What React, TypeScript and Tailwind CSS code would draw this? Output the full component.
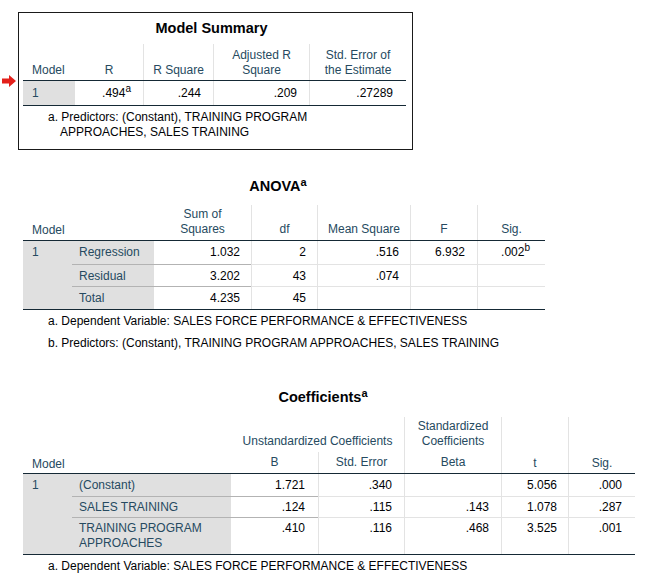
import React from "react";

const HDR = "text-[#264a60]";
const DAT = "text-[#010205]";
const VL = "border-l border-[#e3e3e3]";
const RL = "border-b border-[#b3b3b3]";
const GRAY = "bg-[#e0e0e0]";

function Title({ text, sup }: { text: string; sup?: string }) {
  return (
    <div className="h-[20px] leading-[20px] pr-[12px] text-center text-[14.5px] font-bold text-[#010205]">
      {text}
      {sup ? <sup className="text-[11px] font-bold">{sup}</sup> : null}
    </div>
  );
}

function ModelSummary() {
  const cols = "grid grid-cols-[52px_68px_70px_96px_97px]";
  return (
    <div className="w-[395px] border border-[#1a1a1a] pl-[4px]">
      <div className="h-[31px] pt-[5px]">
        <Title text="Model Summary" />
      </div>
      <div className="w-[383px]">
        <div className={`${cols} h-[37px] border-b border-[#152935] ${HDR}`}>
          <div className="flex items-end pl-[9px] pb-[2px]">Model</div>
          <div className="flex items-end justify-center pb-[2px]">R</div>
          <div className={`flex items-end justify-center pb-[2px] ${VL}`}>R Square</div>
          <div className={`flex items-end justify-center text-center pb-[2px] ${VL}`}>
            Adjusted R
            <br />
            Square
          </div>
          <div className={`flex items-end justify-center text-center pb-[2px] ${VL}`}>
            Std. Error of
            <br />
            the Estimate
          </div>
        </div>
        <div className={`${cols} h-[25px] border-b border-[#152935]`}>
          <div className={`${GRAY} ${HDR} pl-[9px] pt-[5px]`}>1</div>
          <div className={`${DAT} text-right pr-[12px] pt-[5px]`}>
            .494<sup className="text-[10px]">a</sup>
          </div>
          <div className={`${DAT} text-right pr-[12px] pt-[5px] ${VL}`}>.244</div>
          <div className={`${DAT} text-right pr-[12px] pt-[5px] ${VL}`}>.209</div>
          <div className={`${DAT} text-right pr-[13px] pt-[5px] ${VL}`}>.27289</div>
        </div>
        <div className={`h-[43px] pt-[4px] ${DAT}`}>
          <div className="pl-[25px]">a. Predictors: (Constant), TRAINING PROGRAM</div>
          <div className="pl-[37px]">APPROACHES, SALES TRAINING</div>
        </div>
      </div>
    </div>
  );
}

function Anova() {
  const cols = "grid grid-cols-[49px_82px_97px_66px_93px_67px_68px]";
  const rows: [string, string, string, string, string, React.ReactNode, string][] = [
    ["Regression", "1.032", "2", ".516", "6.932", <>.002<sup className="text-[10px]">b</sup></>, "pt-[4px]"],
    ["Residual", "3.202", "43", ".074", "", "", "pt-[4px]"],
    ["Total", "4.235", "45", "", "", "", "pt-[4px]"],
  ];
  return (
    <div className="ml-[23px] mt-[26px] w-[522px]">
      <Title text="ANOVA" sup="a" />
      <div className="mt-[9px]">
        <div className={`${cols} h-[36px] border-b border-[#152935] ${HDR}`}>
          <div className="col-span-2 flex items-end pl-[9px] pb-[2px]">Model</div>
          <div className="flex items-end justify-center text-center pb-[3px]">
            Sum of
            <br />
            Squares
          </div>
          <div className={`flex items-end justify-center pb-[3px] ${VL}`}>df</div>
          <div className={`flex items-end justify-center pb-[3px] ${VL}`}>Mean Square</div>
          <div className={`flex items-end justify-center pb-[3px] ${VL}`}>F</div>
          <div className={`flex items-end justify-center pb-[3px] ${VL}`}>Sig.</div>
        </div>
        <div className={`${cols} grid-rows-[24px_22px_22px] border-b border-[#152935]`}>
          <div className={`row-span-3 ${GRAY} ${HDR} pl-[9px] pt-[4px]`}>1</div>
          {rows.map((r, i) => {
            const rl = i < 2 ? RL : "";
            return (
              <React.Fragment key={i}>
                <div className={`${GRAY} ${HDR} pl-[7px] ${r[6]} ${rl}`}>{r[0]}</div>
                <div className={`${DAT} text-right pr-[11px] ${r[6]} ${rl}`}>{r[1]}</div>
                <div className={`${DAT} text-right pr-[11px] ${r[6]} ${rl} ${VL}`}>{r[2]}</div>
                <div className={`${DAT} text-right pr-[11px] ${r[6]} ${rl} ${VL}`}>{r[3]}</div>
                <div className={`${DAT} text-right pr-[12px] ${r[6]} ${rl} ${VL}`}>{r[4]}</div>
                <div className={`${DAT} text-right pr-[15px] ${r[6]} ${rl} ${VL}`}>{r[5]}</div>
              </React.Fragment>
            );
          })}
        </div>
        <div className={DAT}>
          <div className="h-[22px] flex items-center pl-[25px]">
            a. Dependent Variable: SALES FORCE PERFORMANCE &amp; EFFECTIVENESS
          </div>
          <div className="h-[22px] flex items-center pl-[25px]">
            b. Predictors: (Constant), TRAINING PROGRAM APPROACHES, SALES TRAINING
          </div>
        </div>
      </div>
    </div>
  );
}

function Coefficients() {
  const cols = "grid grid-cols-[49px_159px_87px_86px_97px_67px_67px]";
  const rows: [React.ReactNode, string, string, string, string, string, string][] = [
    ["(Constant)", "1.721", ".340", "", "5.056", ".000", "pt-[4px]"],
    ["SALES TRAINING", ".124", ".115", ".143", "1.078", ".287", "pt-[3px]"],
    [
      <>
        TRAINING PROGRAM
        <br />
        APPROACHES
      </>,
      ".410",
      ".116",
      ".468",
      "3.525",
      ".001",
      "pt-[3px]",
    ],
  ];
  return (
    <div className="ml-[23px] mt-[33px] w-[612px]">
      <Title text="Coefficients" sup="a" />
      <div className="mt-[10px]">
        <div className={`${cols} grid-rows-[35px_21px] h-[57px] border-b border-[#152935] ${HDR}`}>
          <div className="col-start-1 col-span-2 row-start-1 row-span-2 flex items-end pl-[9px] pb-[1px]">
            Model
          </div>
          <div className="col-start-3 col-span-2 row-start-1 flex items-end justify-center pb-[3px]">
            Unstandardized Coefficients
          </div>
          <div className={`col-start-5 row-start-1 flex items-end justify-center text-center pb-[3px] ${VL}`}>
            Standardized
            <br />
            Coefficients
          </div>
          <div className={`col-start-6 row-start-1 row-span-2 flex items-end justify-center pb-[2px] ${VL}`}>
            t
          </div>
          <div className={`col-start-7 row-start-1 row-span-2 flex items-end justify-center pb-[2px] ${VL}`}>
            Sig.
          </div>
          <div className="col-start-3 row-start-2 flex items-end justify-center pb-[3px]">B</div>
          <div className={`col-start-4 row-start-2 flex items-end justify-center pb-[3px] ${VL}`}>
            Std. Error
          </div>
          <div className={`col-start-5 row-start-2 flex items-end justify-center pb-[3px] ${VL}`}>Beta</div>
        </div>
        <div className={`${cols} grid-rows-[23px_21px_36px] border-b border-[#152935]`}>
          <div className={`row-span-3 ${GRAY} ${HDR} pl-[9px] pt-[4px]`}>1</div>
          {rows.map((r, i) => {
            const rl = i < 2 ? RL : "";
            return (
              <React.Fragment key={i}>
                <div className={`${GRAY} ${HDR} pl-[7px] ${r[6]} ${rl}`}>{r[0]}</div>
                <div className={`${DAT} text-right pr-[13px] ${r[6]} ${rl}`}>{r[1]}</div>
                <div className={`${DAT} text-right pr-[12px] ${r[6]} ${rl} ${VL}`}>{r[2]}</div>
                <div className={`${DAT} text-right pr-[12px] ${r[6]} ${rl} ${VL}`}>{r[3]}</div>
                <div className={`${DAT} text-right pr-[11px] ${r[6]} ${rl} ${VL}`}>{r[4]}</div>
                <div className={`${DAT} text-right pr-[13px] ${r[6]} ${rl} ${VL}`}>{r[5]}</div>
              </React.Fragment>
            );
          })}
        </div>
        <div className={DAT}>
          <div className="h-[22px] flex items-center pl-[25px]">
            a. Dependent Variable: SALES FORCE PERFORMANCE &amp; EFFECTIVENESS
          </div>
        </div>
      </div>
    </div>
  );
}

export default function App() {
  return (
    <div className="w-[649px] h-[581px] bg-white overflow-hidden font-['Liberation_Sans',Arial,sans-serif] text-[12px] leading-[15px]">
      <div className="pt-[12px] flex">
        <div className="w-[18px] shrink-0">
          <svg className="ml-[2px] mt-[63px]" width="14" height="12" viewBox="0 0 14 12">
            <polygon points="0,3.5 7,3.5 7,0 14,6 7,12 7,8.5 0,8.5" fill="#e3201b" />
          </svg>
        </div>
        <ModelSummary />
      </div>
      <Anova />
      <Coefficients />
    </div>
  );
}
